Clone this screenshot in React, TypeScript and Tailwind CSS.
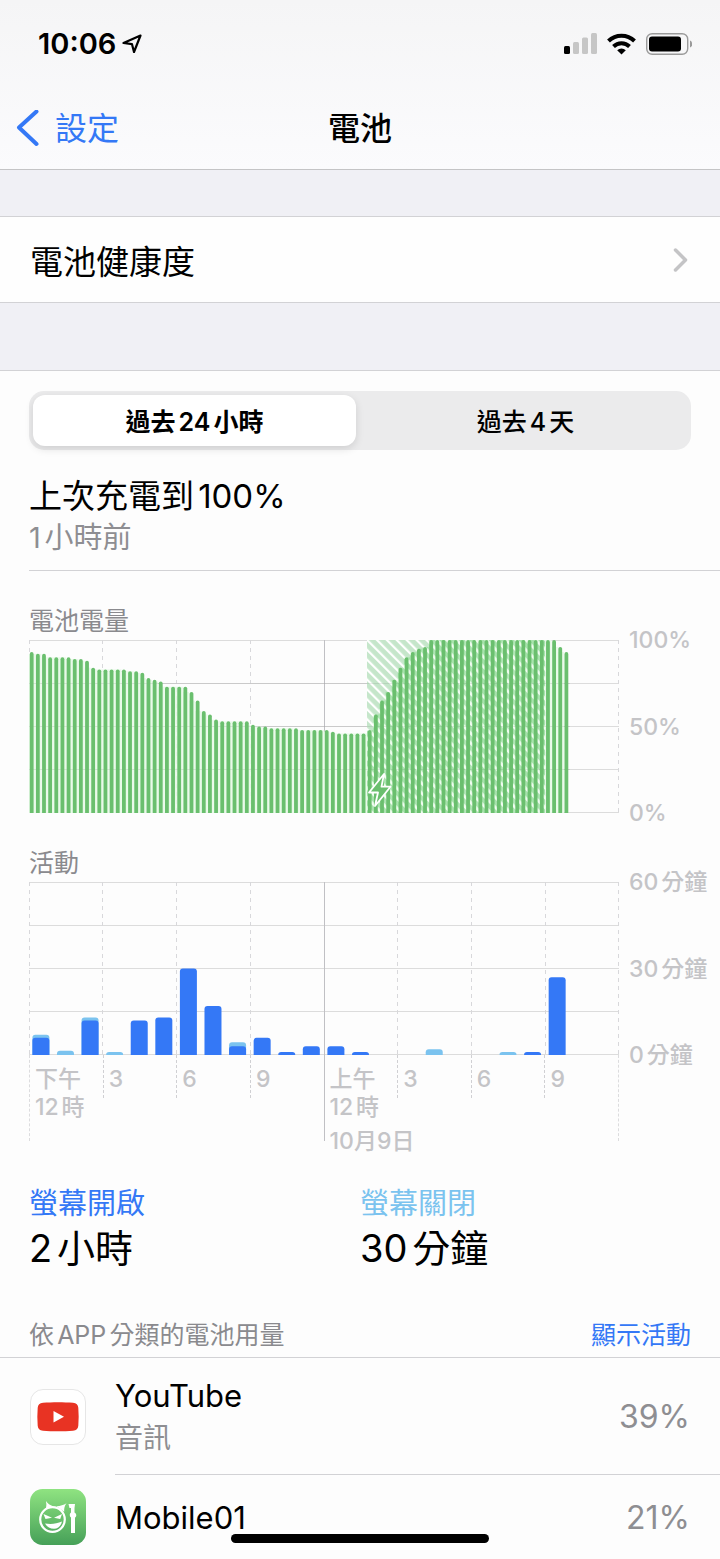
import { useState } from 'react';

const batteryLevels = [
  93, 92, 92, 90, 90, 90, 90, 89, 89, 88, 84, 83, 83, 83, 83, 83, 82, 82, 81, 78, 77, 76,
  73, 73, 73, 73, 70, 65, 59, 57, 54, 53, 53, 53, 53, 53, 51, 50, 50, 49, 49, 49, 49, 49,
  48, 48, 48, 48, 48, 47, 46, 46, 46, 46, 46, 48, 57, 65, 70, 77, 84, 90, 93, 95, 96, 100,
  100, 100, 100, 100, 100, 100, 100, 100, 100, 100, 100, 100, 100, 100, 100, 100, 100, 100,
  100, 100, 96, 93,
];

// minutes per hour, with the screen on and off
const activity = [
  { on: 6, off: 1 },
  { on: 0, off: 1.5 },
  { on: 12, off: 1 },
  { on: 0, off: 1 },
  { on: 12, off: 0 },
  { on: 13, off: 0 },
  { on: 30, off: 0 },
  { on: 17, off: 0 },
  { on: 3, off: 1.4 },
  { on: 6, off: 0 },
  { on: 1, off: 0 },
  { on: 3, off: 0 },
  { on: 3, off: 0 },
  { on: 1, off: 0 },
  { on: 0, off: 0 },
  { on: 0, off: 0 },
  { on: 0, off: 2 },
  { on: 0, off: 0 },
  { on: 0, off: 0 },
  { on: 0, off: 1 },
  { on: 1, off: 0 },
  { on: 27, off: 0 },
];

const ticks = [
  { lines: ['下午', '12時'], edge: true },
  { lines: ['3'] },
  { lines: ['6'] },
  { lines: ['9'] },
  { lines: ['上午', '12時'], date: '10月9日', midnight: true },
  { lines: ['3'] },
  { lines: ['6'] },
  { lines: ['9'] },
];

const W = 590;
const H = 173;

function StatusBar() {
  return (
    <div className="flex h-[88px] items-center justify-between pl-[38px] pr-7">
      <div className="flex items-center gap-[6px]">
        <span className="text-[29px] font-semibold leading-8">10:06</span>
        <svg width="20" height="20" viewBox="0 0 20 20" fill="none" stroke="#000" strokeWidth="2.2" strokeLinejoin="round">
          <path d="M18.5 1.5 1.5 9l8.500 1.200L12 18z" />
        </svg>
      </div>
      <div className="flex items-center gap-[10px]">
        <svg width="33" height="22" viewBox="0 0 33 22">
          <rect x="0" y="13" width="6" height="8" rx="1.5" />
          <rect x="9" y="9" width="6" height="12" rx="1.5" fill="#c6c6c6" />
          <rect x="18" y="4.5" width="6" height="16.5" rx="1.5" fill="#c6c6c6" />
          <rect x="27" y="0" width="6" height="21" rx="1.5" fill="#c6c6c6" />
        </svg>
        <svg width="29" height="22" viewBox="0 0 29 22" fill="none" stroke="#000" strokeWidth="4">
          <path d="M1.5 8a18.5 18.5 0 0 1 26 0" />
          <path d="M6.5 13.5a11.5 11.5 0 0 1 16 0" />
          <path d="m14.5 21.5-4.3-4.3a6.2 6.2 0 0 1 8.6 0z" fill="#000" stroke="none" />
        </svg>
        <svg width="46" height="22" viewBox="0 0 46 22">
          <rect x="0.7" y="0.7" width="41" height="20.6" rx="5.5" fill="none" stroke="#9a9a9a" strokeWidth="1.4" />
          <rect x="3" y="3.5" width="32" height="15" rx="3" />
          <path d="M44 7.5c3 1.200 3 5.800 0 7z" fill="#9a9a9a" />
        </svg>
      </div>
    </div>
  );
}

function GridLines() {
  return (
    <g shapeRendering="crispEdges">
      {[0.5, 43.5, 86.5, 129.5, H - 0.5].map(y => (
        <line key={y} x1="0" x2={W} y1={y} y2={y} stroke="#000" strokeOpacity="0.13" />
      ))}
      {[0, 1, 2, 3, 5, 6, 7, 8].map(i => {
        const x = Math.min(Math.floor((i * W) / 8) + 0.5, W - 0.5);
        return (
          <line key={i} x1={x} x2={x} y1="0" y2={H} stroke="#d8d8db" strokeDasharray="4 4" />
        );
      })}
      <line x1={W / 2 + 0.5} x2={W / 2 + 0.5} y1="0" y2={H} stroke="#c0c0c4" />
    </g>
  );
}

function BatteryChart() {
  const step = W / 96;
  return (
    <svg viewBox={`0 0 ${W} ${H}`} className="block w-full" role="img" aria-label="電池電量">
      <defs>
        <pattern id="hatch" width="7" height="7" patternUnits="userSpaceOnUse" patternTransform="rotate(-45)">
          <rect width="7" height="7" fill="#c5e6ca" />
          <rect width="2.2" height="7" fill="#fff" />
        </pattern>
        <pattern id="hatchStrong" width="7" height="7" patternUnits="userSpaceOnUse" patternTransform="rotate(-45)">
          <rect width="7" height="7" fill="#a8e3ad" />
          <rect width="2.8" height="7" fill="#effcef" />
        </pattern>
      </defs>
      <GridLines />
      <rect x={step * 55} y="0" width={step * 10} height={H} fill="url(#hatch)" />
      {batteryLevels.map((level, i) => {
        // the tint between two bars stops at the lower one
        const next = Math.min(level, batteryLevels[i + 1] ?? 0);
        return (
          <rect
            key={i}
            x={i * step}
            y={H - (next * H) / 100}
            width={step + 0.2}
            height={(next * H) / 100}
            fill={i >= 55 && i < 84 ? 'url(#hatchStrong)' : '#e9fae9'}
          />
        );
      })}
      {[43.5, 86.5, 129.5].map(y => (
        <line key={y} x1="0" x2={step * 88} y1={y} y2={y} stroke="#000" strokeOpacity="0.08" />
      ))}
      {batteryLevels.map((level, i) => {
        const top = H - (level * H) / 100;
        const x = i * step + 0.8;
        return (
          <path
            key={i}
            d={`M${x} ${H}V${top + 1.9}q0-1.9 1.9-1.9t1.9 1.9V${H}z`}
            fill="#6abf6e"
          />
        );
      })}
      <path
        d="M355 134 340 152.500h9l-3 13.500 15.500-19.300h-9z"
        fill="#6abf6e"
        stroke="#fff"
        strokeWidth="1.8"
        strokeLinejoin="round"
      />
    </svg>
  );
}

function ActivityChart() {
  const step = W / 24;
  const bar = (x: number, minutes: number, fill: string) => {
    const h = (minutes * H) / 60;
    const r = Math.min(3, h);
    return (
      <path
        d={`M${x} ${H}v${-(h - r)}q0 ${-r} ${r} ${-r}h${17 - 2 * r}q${r} 0 ${r} ${r}v${h - r}z`}
        fill={fill}
      />
    );
  };
  return (
    <svg viewBox={`0 0 ${W} ${H}`} className="block w-full" role="img" aria-label="活動">
      <GridLines />
      {activity.map(({ on, off }, i) => (
        <g key={i}>
          {off > 0 && bar(i * step + 3.4, on + off, '#7bc3ef')}
          {on > 0 && bar(i * step + 3.4, on, '#3478f6')}
        </g>
      ))}
    </svg>
  );
}

function ScaleLabels({ labels }: { labels: string[] }) {
  return (
    <div className="-my-4 flex w-[101px] shrink-0 flex-col justify-between whitespace-nowrap pl-[10px] text-[23px] font-medium leading-8 text-[#c4c4c7]">
      {labels.map(label => (
        <span key={label}>{label}</span>
      ))}
    </div>
  );
}

function TimeAxis() {
  return (
    <div className="mr-[101px] grid h-[86px] grid-cols-8 border-r border-dashed border-[#dcdcde] text-[23px] font-medium leading-7 text-[#c4c4c7]">
      {ticks.map((tick, i) => (
        <div
          key={i}
          className={
            tick.midnight
              ? 'h-[86px] border-l border-[#c0c0c4] pl-[5px] pt-[10px]'
              : tick.edge
                ? 'h-[86px] border-l border-dashed border-[#dcdcde] pl-[5px] pt-[10px]'
                : 'h-[43px] border-l border-dashed border-[#d0d0d3] pl-[5px] pt-[10px]'
          }
        >
          {tick.lines.map(line => (
            <p key={line} className="whitespace-nowrap">{line}</p>
          ))}
          {tick.date && (
            <p className="whitespace-nowrap pt-[6px] [text-autospace:no-autospace]">{tick.date}</p>
          )}
        </div>
      ))}
    </div>
  );
}

function YouTubeIcon() {
  return (
    <svg width="56" height="56" viewBox="0 0 56 56" className="shrink-0">
      <rect x="0.5" y="0.5" width="55" height="55" rx="12.5" fill="#fff" stroke="#e6e6e6" />
      <path d="M13 13.700c9-.7 21-.7 30 0 3.500.4 5 2 5.300 5 .5 6 .5 12 0 18-.3 3-1.800 4.600-5.300 5-9 .7-21 .7-30 0-3.500-.4-5-2-5.300-5-.5-6-.5-12 0-18 .3-3 1.800-4.600 5.300-5z" fill="#e83323" />
      <path d="M23.5 22v11.500l10.500-5.700z" fill="#fff" />
    </svg>
  );
}

function Mobile01Icon() {
  return (
    <svg width="56" height="56" viewBox="0 0 56 56" className="shrink-0">
      <defs>
        <linearGradient id="mobile01" x1="0" y1="0" x2="0" y2="1">
          <stop offset="0" stopColor="#8fe381" />
          <stop offset="1" stopColor="#46a058" />
        </linearGradient>
      </defs>
      <rect width="56" height="56" rx="12.5" fill="url(#mobile01)" />
      <circle cx="22.5" cy="30.5" r="12.3" fill="none" stroke="#fff" strokeWidth="2.2" />
      <path d="M16 19.500c.5-2.500.5-5 0-7.500 1.700 2.500 4 4.200 7 5.200zM26.500 17.200c4-.3 7-1.200 10-3-1.800 2.300-2.500 5-2.300 8.500z" fill="#fff" />
      <path d="m13.500 25 8.500 3.800-6.500 1.200zM32 25l-8 3.800 6.200 1.200z" fill="#fff" />
      <path d="M15 34.500c6 1 11.500.4 17-2-1 4.500-4 7.300-8 7.300-4-.1-7.200-2-9-5.300z" fill="#fff" />
      <path d="M38.500 15h6.500l-.5 4v4.500c2.300 1 2.300 4 .5 5v15.500h-4v-15.500c-1.600-1-1.600-4 0-5v-4.500h-1.500z" fill="#fff" />
    </svg>
  );
}

export default function App() {
  const [range, setRange] = useState<'day' | 'days'>('day');

  const segment = 'flex-1 rounded-xl pt-[2px] text-[25px] leading-8 text-black';
  const selected = 'bg-white font-semibold shadow-[0_3px_8px_rgba(0,0,0,0.12)]';

  return (
    <div className="min-h-screen bg-[#fdfdfd] font-[Inter,'Noto_Sans_CJK_TC',sans-serif] text-black [text-autospace:normal]">
      <header className="border-b border-[#c4c4c6] bg-gradient-to-b from-[#f5f5f6] to-[#fbfbfd]">
        <StatusBar />
        <div className="grid h-[81px] grid-cols-3 items-center">
          <a href="#settings" className="flex items-center gap-4 pl-4 text-[32px] leading-10 text-[#3478f6]">
            <svg width="23" height="38" viewBox="0 0 23 38" fill="none" stroke="currentColor" strokeWidth="4" strokeLinecap="round" strokeLinejoin="round">
              <path d="M20.5 1.5 3 17.500l17.500 16.500" />
            </svg>
            設定
          </a>
          <h1 className="text-center text-[32px] font-medium leading-10">電池</h1>
        </div>
      </header>

      <main>
        <section className="border-b border-[#d2d2d5] bg-[#f0f0f5] pb-[67px] pt-[46px]">
          <a
            href="#health"
            className="flex h-[87px] items-center justify-between border-y border-[#d2d2d5] bg-[#fefefe] pl-[30px] pr-8 text-[33px] leading-10"
          >
            <span className="pt-1">電池健康度</span>
            <svg width="15" height="24" viewBox="0 0 15 24" fill="none" stroke="#c4c4c6" strokeWidth="3.5" strokeLinecap="round" strokeLinejoin="round">
              <path d="m2.500 2 10 10-10 10" />
            </svg>
          </a>
        </section>

        <section className="pt-5">
          <div className="mx-[29px] flex h-[59px] gap-2 rounded-[15px] bg-[#ebebec] p-1">
            <button
              type="button"
              aria-pressed={range === 'day'}
              onClick={() => setRange('day')}
              className={`${segment} ${range === 'day' ? selected : 'font-medium'}`}
            >
              過去24小時
            </button>
            <button
              type="button"
              aria-pressed={range === 'days'}
              onClick={() => setRange('days')}
              className={`${segment} ${range === 'days' ? selected : 'font-medium'}`}
            >
              過去4天
            </button>
          </div>

          <div className="ml-[29px] border-b border-[#d2d2d5] pb-[14px] pt-[26px]">
            <p className="text-[33px] leading-10">上次充電到100%</p>
            <p className="pt-1 text-[29px] leading-9 text-[#8e8e92]">1小時前</p>
          </div>
        </section>

        <section className="pl-[29px] pt-[34px]">
          <h2 className="text-[25px] leading-8 text-[#8a8a8e]">電池電量</h2>
          <div className="flex pt-[3px]">
            <div className="flex-1">
              <BatteryChart />
            </div>
            <ScaleLabels labels={['100%', '50%', '0%']} />
          </div>

          <h2 className="pt-[34px] text-[25px] leading-8 text-[#8a8a8e]">活動</h2>
          <div className="flex pt-[3px]">
            <div className="flex-1">
              <ActivityChart />
            </div>
            <ScaleLabels labels={['60分鐘', '30分鐘', '0分鐘']} />
          </div>
          <TimeAxis />
        </section>

        <section className="grid grid-cols-2 px-[29px] pt-[45px]">
          <div>
            <h3 className="text-[29px] leading-9 text-[#3478f6]">螢幕開啟</h3>
            <p className="text-[38px] leading-[52px]">2小時</p>
          </div>
          <div>
            <h3 className="text-[29px] leading-9 text-[#7bc3ef]">螢幕關閉</h3>
            <p className="text-[38px] leading-[52px]">30分鐘</p>
          </div>
        </section>

        <section>
          <div className="flex items-center justify-between border-b border-[#d2d2d5] px-[29px] pb-[6px] pt-[45px] text-[25px] leading-8">
            <h2 className="text-[#8a8a8e]">依APP分類的電池用量</h2>
            <button type="button" className="text-[#3478f6]">顯示活動</button>
          </div>
          <ul>
            <li className="flex items-center pl-[30px]">
              <YouTubeIcon />
              <div className="ml-[29px] flex h-[117px] flex-1 items-center justify-between border-b border-[#d2d2d5] pr-[30px] pt-[2px]">
                <div>
                  <p className="text-[31px] leading-10">YouTube</p>
                  <p className="pt-[2px] text-[28px] leading-10 text-[#8e8e92]">音訊</p>
                </div>
                <span className="text-[32px] leading-10 text-[#8e8e92]">39%</span>
              </div>
            </li>
            <li className="flex items-center pl-[30px]">
              <Mobile01Icon />
              <div className="ml-[29px] flex h-[84px] flex-1 items-center justify-between pr-[30px] pt-[2px]">
                <p className="text-[31px] leading-10">Mobile01</p>
                <span className="text-[32px] leading-10 text-[#8e8e92]">21%</span>
              </div>
            </li>
          </ul>
        </section>
      </main>

      <div className="fixed bottom-4 left-1/2 h-[9px] w-[258px] -translate-x-1/2 rounded-full bg-black" />
    </div>
  );
}
